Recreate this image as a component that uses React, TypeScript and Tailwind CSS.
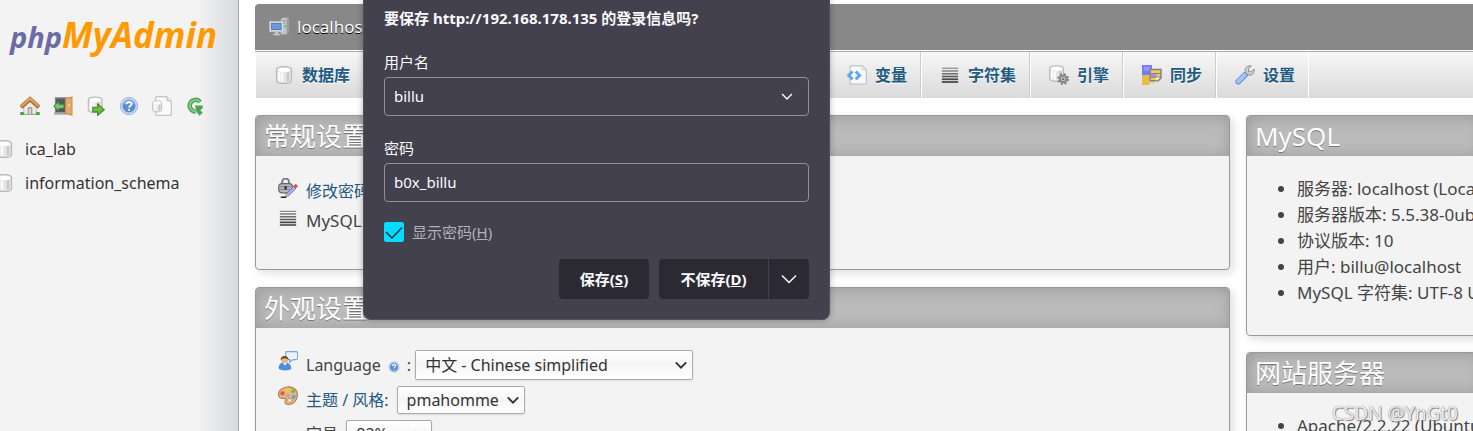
import {useId, useState} from "react";
import type {ReactNode} from "react";

const tabs = [
    {label: "变量", icon: <VariablesIcon />},
    {label: "字符集", icon: <LinesIcon />},
    {label: "引擎", icon: <EngineIcon />},
    {label: "同步", icon: <SyncIcon />},
    {label: "设置", icon: <WrenchIcon />},
];

const mysqlInfo = [
    "服务器: localhost (Localhost via UNIX socket)",
    "服务器版本: 5.5.38-0ubuntu0.12.04.1",
    "协议版本: 10",
    "用户: billu@localhost",
    "MySQL 字符集: UTF-8 Unicode (utf8)",
];

const databases = ["ica_lab", "information_schema"];

function Icon({children, className = "size-5"}: {children: ReactNode, className?: string}) {
    return <svg viewBox="0 0 16 16" className={`shrink-0 ${className}`} fill="none" aria-hidden="true">{children}</svg>;
}

function HomeIcon() {
    return (
        <Icon>
            <path d="M0.3 14.2c1-1.200 2.800-1 3.700 0h8c1-1 2.700-1.200 3.700 0v1H.3z" fill="#4da34a" />
            <path d="M3 7.500 8 3l5 4.500V14.500H3z" fill="#efeae2" stroke="#b9b1a6" strokeWidth=".6" />
            <path d="M6.200 9h3.600v5.500H6.200z" fill="#8c8f93" />
            <path d="M7 10h2v4.500H7z" fill="#d6d8da" />
            <path d="M.8 9 8 2.500 15.200 9" stroke="#a8682c" strokeWidth="3.400" />
            <path d="M1 8.300 8 2l7 6.300" stroke="#d9a066" strokeWidth="2" />
            <path d="M.3 12.800h2.400c.8.700.8 1.800.3 2.400H.3zM15.700 12.800h-2.400c-.8.700-.8 1.800-.3 2.400h2.700z" fill="#4da34a" />
        </Icon>
    );
}

function ExitIcon() {
    return (
        <Icon>
            <path d="M1.500 1H11v13H1.500z" fill="#7d8084" />
            <path d="M2.500 2.200H10V13H2.500z" fill="#54585c" />
            <path d="M1 13h10v2H1z" fill="#a6a8aa" />
            <path d="M9.500 1.500 15.600.3v15.400l-6.100-1.600z" fill="#c98a4c" />
            <path d="M10.500 2.300 14.800 1.500v13l-4.300-1.100z" fill="#e0ab70" />
            <circle cx="12.800" cy="7.300" r=".8" fill="#ffe28a" />
            <path d="M.6 8.200 4.800 4.200v2.300h4v3.500h-4v2.300z" fill="#7cc26c" stroke="#2e7d3a" strokeWidth=".8" />
        </Icon>
    );
}

function Cylinder() {
    return (
        <>
            <path d="M2 3.600C2 .4 14 .4 14 3.600v8.900c0 3-12 3-12 0z" fill="#e6e6e6" stroke="#b9b9b9" />
            <path d="M4.200 5.500v7.300M6.500 6.200v7.300" stroke="#fafafa" strokeWidth="1.800" />
            <path d="M11.200 5.700v7.500" stroke="#c9c9c9" strokeWidth="2.200" />
            <ellipse cx="8" cy="3.900" rx="5" ry="1.800" fill="#fff" />
        </>
    );
}

function DatabaseIcon() {
    return <Icon><Cylinder /></Icon>;
}

function QueryIcon() {
    return (
        <Icon>
            <g transform="translate(0 -.3) scale(.92)"><Cylinder /></g>
            <path d="M5.400 9h3.900V6.300l5.300 4.600-5.300 4.600v-2.800H5.400z" fill="#6fbb3f" stroke="#3f8a25" strokeWidth=".9" />
        </Icon>
    );
}

function HelpIcon({className = "size-5"}: {className?: string}) {
    return (
        <Icon className={className}>
            <circle cx="8" cy="8" r="6.900" fill="#c5d8f0" stroke="#8fb0da" strokeWidth=".7" />
            <circle cx="8" cy="8" r="5.200" fill="#5b8ccb" />
            <path d="M3.200 6.700a5 5 0 0 1 9.600 0c-3-.8-6.600-.8-9.600 0z" fill="#86abdc" />
            <path d="M6 6.600c0-2.400 4.100-2.300 4.100-.2 0 1.500-2 1.400-2 2.900M8.100 10.400v1.300" stroke="#fff" strokeWidth="1.400" />
        </Icon>
    );
}

function DocIcon() {
    return (
        <Icon>
            <path d="M3 .6h9l3.400 3.200v11.600H3z" fill="#fafafa" stroke="#b8b8b8" strokeWidth=".8" />
            <path d="M12 .6v3.200h3.400" stroke="#b8b8b8" strokeWidth=".8" fill="#e8e8e8" />
            <g transform="translate(-.7 3) scale(.6 .66)"><Cylinder /></g>
        </Icon>
    );
}

function ReloadIcon() {
    return (
        <Icon>
            <path d="M12 4.900A4.600 4.600 0 1 0 8.500 12.300" stroke="#4ca353" strokeWidth="3.600" />
            <path d="M12 4.900A4.600 4.600 0 1 0 8.500 12.300" stroke="#83c985" strokeWidth="1.600" />
            <path d="M8 7.600h6.200v1.900l-2 1.800 2 2-2.600 2.400-2.400-3z" fill="#4ca353" />
        </Icon>
    );
}

function ServerIcon() {
    return (
        <Icon>
            <path d="M9.500 1.800 11.200.5h4.300v12l-1.500 1.300H9.500z" fill="#c4c7c6" />
            <path d="M14 2v11.800l1.500-1.300V.5z" fill="#999d9b" />
            <path d="M10.500 3.200H13M10.500 5H13" stroke="#888" strokeWidth=".7" />
            <path d="M13 6.500v1.600" stroke="#4bb04e" strokeWidth="1.200" />
            <path d="M.5 3.500h10.800v8.300H.5z" fill="#dfe3e6" stroke="#b9bec4" strokeWidth=".6" />
            <path d="M1.700 4.700h8.400V10.500H1.700z" fill="#3f72b8" />
            <path d="M2.300 5.300h7.200v4.500H2.300z" fill="#6c98d4" />
            <path d="M4.800 12h2.600v1.500H9v1H3.200v-1h1.600z" fill="#c5c9cc" />
        </Icon>
    );
}

function VariablesIcon() {
    return (
        <Icon>
            <path d="M2.500.7h10L15.400 3.600v11.700H2.500z" fill="#f8f8f8" stroke="#b9b9b9" strokeWidth=".8" />
            <path d="M12.300.9v2.900h3" stroke="#c4c4c4" strokeWidth=".8" />
            <path d="M4.400 5.200 1.300 8.300l3.100 3.100M7 5.200l3.100 3.100L7 11.400" stroke="#5ea6ee" strokeWidth="2.300" />
        </Icon>
    );
}

function LinesIcon() {
    return (
        <Icon>
            <path d="M1.500 2.600h13" stroke="#8d8d8d" strokeWidth="1" />
            <path d="M1.500 4.800h13" stroke="#7b7b7b" strokeWidth="1.100" />
            <path d="M1.500 7h13" stroke="#6a6a6a" strokeWidth="1.200" />
            <path d="M1.500 9.200h13" stroke="#585858" strokeWidth="1.300" />
            <path d="M1.500 11.400h13" stroke="#474747" strokeWidth="1.400" />
            <path d="M1.500 13.600h13" stroke="#3d3d3d" strokeWidth="1.300" />
        </Icon>
    );
}

function EngineIcon() {
    return (
        <Icon>
            <g transform="translate(-1.300 -.5) scale(.92)"><Cylinder /></g>
            <circle cx="11.300" cy="11.200" r="3.800" stroke="#858585" strokeWidth="1.800" strokeDasharray="1.700 1.290" />
            <circle cx="11.300" cy="11.200" r="2.600" fill="#ccc" stroke="#858585" strokeWidth="1.600" />
            <circle cx="11.300" cy="11.200" r="1" fill="#777" />
        </Icon>
    );
}

function SyncIcon() {
    return (
        <Icon>
            <path d="M0 0h8v8H0z" fill="#7b79f5" />
            <path d="M1.500 1.500h5v3h-5z" fill="#9a98ff" />
            <path d="M0 8h6v8H0z" fill="#e8bd3f" />
            <path d="M6 12h4v3H6z" fill="#f0d27a" />
            <path d="M6.500 3.600h8.700v6.800l-2.200 2.200H6.500z" fill="#f1cb5d" stroke="#858187" strokeWidth="1.200" />
            <path d="M7.200 7.200h4.500v2h-4.500z" fill="#9795f4" />
            <path d="M6.500 6.800h8.700M6.500 9.700h8.700" stroke="#858187" strokeWidth=".9" />
            <path d="M11.300 12.500V10h3z" fill="#fff" />
        </Icon>
    );
}

function WrenchIcon() {
    return (
        <Icon>
            <path d="m7.500 8.500 3-3" stroke="#9b9b9b" strokeWidth="3.400" />
            <path d="M13 .8 10.800 3v2.300h2.300l2.200-2.100c.6 2.600-1 4.900-3.300 4.900-2.200 0-4-1.500-4-3.700C8 2 10.300.2 13 .8z" fill="#cfcfcf" stroke="#8f8f8f" strokeWidth=".8" />
            <path d="m2.600 13.400 5.300-5.300" stroke="#6c96d6" strokeWidth="4.600" strokeLinecap="round" />
            <path d="m2.600 13.200 5.100-5.100" stroke="#a6c4f0" strokeWidth="3" strokeLinecap="round" />
        </Icon>
    );
}

function PasswordIcon() {
    return (
        <Icon>
            <path d="M3.300 5.500V3.200C3.300-.4 8.800-.4 8.800 3.200v2.300" stroke="#77787d" strokeWidth="1.500" />
            <rect x=".6" y="4.500" width="11" height="7.300" rx="2.700" fill="#b6b7bf" stroke="#66676e" strokeWidth="1" />
            <path d="M1.500 7h9M1.500 9.200h9" stroke="#82838b" strokeWidth=".9" />
            <path d="M5 6.300h2.200v2.800H5z" fill="#44454c" />
            <path d="m6.200 13.200 6.300-6.500 1.900 1.600-6.300 6.200-2.300.7z" fill="#a9b4ee" stroke="#5763a5" strokeWidth=".6" />
            <path d="m12.300 6.500 1.200-1.300c1-.8 2.800.8 2 1.800l-1.200 1.300z" fill="#df482d" />
            <path d="m5.500 15.300.7-2.200 1.900 1.600z" fill="#f2cf45" />
            <path d="M2.200 15.300h4.500" stroke="#222" strokeWidth="1.200" />
        </Icon>
    );
}

function LanguageIcon() {
    return (
        <Icon>
            <path d="M7 .5h7.500c1 0 1.200.6 1.200 1.300v3.700c0 .8-.4 1.400-1.300 1.400H12L9.300 9l.2-2.100H8L6.200 5V1.500C6.200.8 6.500.5 7 .5z" fill="#eaf3fd" stroke="#78a5d8" strokeWidth=".9" />
            <path d="M.5 14c0-3.500 1.700-4.800 4.700-4.800s5.500 1.500 5.500 5c-1.600 1.700-8.500 1.900-10.200-.2z" fill="#4d8ed9" />
            <path d="m4 9.500 1.600 2 1.600-2z" fill="#fff" />
            <circle cx="5.300" cy="6.900" r="2.800" fill="#e8b68b" />
            <path d="M2.200 7.300C1.700 3 8.600 2.800 8.500 7 6.500 5.500 4.500 5.300 2.200 7.300z" fill="#704625" />
        </Icon>
    );
}

function PaletteIcon() {
    return (
        <Icon>
            <path d="M7 .8c5-.8 8.700 2.300 8.500 6.700-.1 4.500-3.700 7.300-7 7.300-2.700 0-3.500-1.700-2.500-3.300.7-1.200-.2-1.700-1.500-1.600C2 10.200.5 9 .4 6.500.3 3.500 3.300 1.300 7 .8z" fill="#e7b483" stroke="#b97b4b" strokeWidth=".9" />
            <circle cx="3.600" cy="5.800" r="1.700" fill="#e15447" />
            <circle cx="7.800" cy="3.200" r="1.600" fill="#f3cb2c" />
            <circle cx="12" cy="4.200" r="1.500" fill="#6cbd54" />
            <circle cx="12.600" cy="8.700" r="1.600" fill="#61a5d8" />
            <circle cx="9.300" cy="11.500" r="1.600" fill="#fff1df" stroke="#b97b4b" strokeWidth=".6" />
            <circle cx="7.900" cy="7.700" r="1.300" fill="#78bdb1" />
        </Icon>
    );
}

function Chevron({className}: {className: string}) {
    return (
        <svg viewBox="0 0 16 10" className={className} fill="none" stroke="currentColor" aria-hidden="true">
            <path d="m1 1.500 7 7 7-7" />
        </svg>
    );
}

function Select({id, className, value}: {id: string, className: string, value: string}) {
    return (
        <span className={`relative flex items-center text-[#333] ${className}`}>
            <select id={id} defaultValue={value} className="h-full w-full appearance-none rounded-xs border border-[#aaa] bg-linear-to-b from-white via-[#f6f6f6] to-white px-[9px] shadow-[0_1px_2px_#ddd]">
                <option>{value}</option>
            </select>
            <Chevron className="pointer-events-none absolute right-[6px] h-[8px] w-[12px] stroke-[2.5]" />
        </span>
    );
}

function Group({title, children, className = ""}: {title: string, children: ReactNode, className?: string}) {
    return (
        <section className={`overflow-hidden rounded border border-[#999] bg-[#f3f3f3] shadow-[3px_3px_10px_#ddd] ${className}`}>
            <h2 className="h-10 bg-[#bbb] px-2 text-[26px] leading-10 whitespace-nowrap text-white shadow-[inset_1px_1px_15px_#999] [text-shadow:0_1px_0_#777]">{title}</h2>
            {children}
        </section>
    );
}

function Sidebar() {
    const actions = [
        {label: "主页", icon: <HomeIcon />},
        {label: "退出", icon: <ExitIcon />},
        {label: "查询窗口", icon: <QueryIcon />},
        {label: "帮助", icon: <HelpIcon />},
        {label: "文档", icon: <DocIcon />},
        {label: "刷新", icon: <ReloadIcon />},
    ];

    return (
        <aside className="w-[239px] shrink-0 overflow-hidden border-r border-[#aaa] bg-[#f3f3f3] bg-linear-to-r from-[#f3f3f3] from-83% to-[#d7dade] text-[#333]">
            <a href="#" className="block pt-3 pl-[10px] font-bold whitespace-nowrap italic">
                <span className="text-[29px] leading-[45px] text-[#6c6ca4]">php</span>
                <span className="text-[35px] leading-[45px] text-[#f90]">MyAdmin</span>
            </a>
            <nav className="mt-[37px] flex gap-[13px] pl-5">
                {actions.map((a) => <a key={a.label} href="#" aria-label={a.label}>{a.icon}</a>)}
            </nav>
            <ul className="mt-4 flex flex-col">
                {databases.map((db) => (
                    <li key={db} className="-ml-[6px] flex h-[34px] items-center gap-[11px]">
                        <DatabaseIcon />
                        <a href="#">{db}</a>
                    </li>
                ))}
            </ul>
        </aside>
    );
}

function Tab({label, icon}: {label: string, icon: ReactNode}) {
    return (
        <li className="border-r border-l border-r-[#ccc] border-l-white last:border-r-white">
            <a href="#" className="flex h-full items-center gap-2 pr-[13px] pl-[18px] font-bold text-[#235a81] [text-shadow:0_1px_0_#fff]">{icon}{label}</a>
        </li>
    );
}

function SavePassword() {
    const id = useId();
    const [visible, setVisible] = useState(true);
    const field = "h-[39px] w-full rounded border border-[#8f8f9d] bg-transparent px-[9px] pb-[2px]";

    return (
        <div role="dialog" aria-labelledby={id + "title"} className="absolute top-0 left-[363px] z-10 w-[467px] rounded-b-lg border border-t-0 border-[#52505f] bg-[#42414d] px-5 pb-5 text-[15px] leading-5 text-[#fbfbfe] shadow-[0_0_6px_rgba(0,0,0,0.3)]">
            <h1 id={id + "title"} className="pt-2 font-bold">要保存 http://192.168.178.135 的登录信息吗?</h1>
            <label htmlFor={id + "user"} className="mt-6 mb-[5px] block">用户名</label>
            <div className="relative flex items-center">
                <input id={id + "user"} type="text" defaultValue="billu" className={field} />
                <button aria-label="显示用户名" className="absolute right-4"><Chevron className="h-[7px] w-3 stroke-2" /></button>
            </div>
            <label htmlFor={id + "pass"} className="mt-[22px] mb-[5px] block">密码</label>
            <input id={id + "pass"} type={visible ? "text" : "password"} defaultValue="b0x_billu" className={field} />
            <div className="mt-5 flex items-center gap-2 text-[#b2b1ba]">
                <span className="relative flex size-5">
                    <input id={id + "show"} type="checkbox" checked={visible} onChange={(e) => setVisible(e.target.checked)} className="size-5 appearance-none rounded-xs border border-[#8f8f9d] checked:border-[#0df] checked:bg-[#0df]" />
                    {visible && <svg viewBox="0 0 20 20" className="pointer-events-none absolute inset-0" fill="none" stroke="#2b2a33" strokeWidth="1.500" aria-hidden="true"><path d="m2 10 6 6L18 5.500" /></svg>}
                </span>
                <label htmlFor={id + "show"}>显示密码(<u>H</u>)</label>
            </div>
            <div className="mt-[17px] flex justify-end font-bold">
                <button className="mr-[10px] h-10 w-[90px] rounded bg-[#2b2a33]">保存(<u>S</u>)</button>
                <button className="h-10 w-[109px] rounded-l bg-[#2b2a33]">不保存(<u>D</u>)</button>
                <button aria-label="更多" className="ml-px flex h-10 w-10 items-center justify-center rounded-r bg-[#2b2a33]"><Chevron className="h-[10px] w-4 stroke-[1.5]" /></button>
            </div>
        </div>
    );
}

export default function App() {
    return (
        <div className="relative flex h-screen overflow-hidden bg-white font-['Noto_Sans','Noto_Sans_CJK_SC',sans-serif] text-base text-[#444]">
            <Sidebar />
            <div className="flex min-w-0 flex-1 flex-col pt-1 pl-4">
                <header className="flex h-[46px] shrink-0 items-center gap-2 rounded-tl bg-[#888] pl-[14px] text-[17px] text-white [text-shadow:0_1px_0_#000]">
                    <ServerIcon />
                    <a href="#">localhost</a>
                </header>
                <ul className="mt-px flex h-[47px] shrink-0 border-t border-[#aaa] bg-linear-to-b from-[#f7f7f7] to-[#dadada] whitespace-nowrap">
                    <Tab label="数据库" icon={<DatabaseIcon />} />
                    <li className="w-[464px] shrink-0" />
                    {tabs.map((t) => <Tab key={t.label} {...t} />)}
                </ul>
                <main className="mt-[17px] flex gap-4">
                    <div className="flex min-w-0 flex-1 flex-col gap-[17px]">
                        <Group title="常规设置">
                            <ul className="flex flex-col px-[22px] pt-5 pb-[33px]">
                                <li className="flex h-[30px] items-center gap-2 [&>svg]:mb-[6px]"><PasswordIcon /><a href="#" className="text-[#235a81]">修改密码</a></li>
                                <li className="flex h-[30px] items-center gap-2 text-[17px] [&>svg]:mb-[6px]"><LinesIcon />MySQL</li>
                            </ul>
                        </Group>
                        <Group title="外观设置">
                            <ul className="flex flex-col gap-[6px] px-[22px] pt-[22px] pb-8 whitespace-nowrap">
                                <li className="flex items-center [&>svg:first-child]:mb-2">
                                    <LanguageIcon />
                                    <label htmlFor="language" className="ml-2">Language</label>
                                    <HelpIcon className="mx-[7px] mt-1 size-3" />:
                                    <Select id="language" value="中文 - Chinese simplified" className="ml-1 h-[30px] w-[278px]" />
                                </li>
                                <li className="flex items-center [&>svg:first-child]:mb-2">
                                    <PaletteIcon />
                                    <label htmlFor="theme" className="ml-2"><a href="#" className="text-[#235a81]">主题 / 风格</a>:</label>
                                    <Select id="theme" value="pmahomme" className="ml-2 h-7 w-32" />
                                </li>
                                <li className="flex items-center pl-7">
                                    <label htmlFor="size">字号:</label>
                                    <Select id="size" value="82%" className="ml-1 h-7 w-[86px]" />
                                </li>
                            </ul>
                        </Group>
                    </div>
                    <div className="flex w-[227px] shrink-0 flex-col gap-4">
                        <Group title="MySQL" className="-mr-2">
                            <ul className="list-disc pt-5 pb-[29px] pl-[50px] text-[17px] leading-[26px] whitespace-nowrap">
                                {mysqlInfo.map((line) => <li key={line}>{line}</li>)}
                            </ul>
                        </Group>
                        <Group title="网站服务器" className="-mr-2">
                            <ul className="list-disc pt-5 pb-5 pl-[50px] text-[17px] leading-[26px] whitespace-nowrap">
                                <li>Apache/2.2.22 (Ubuntu)</li>
                            </ul>
                        </Group>
                    </div>
                </main>
            </div>
            <SavePassword />
            <p className="absolute right-[15px] bottom-[6px] text-[19px] leading-6 text-[#eee] [text-shadow:0_0_1px_#777,1px_1px_1px_#888]">CSDN @YnGt0</p>
        </div>
    );
}
